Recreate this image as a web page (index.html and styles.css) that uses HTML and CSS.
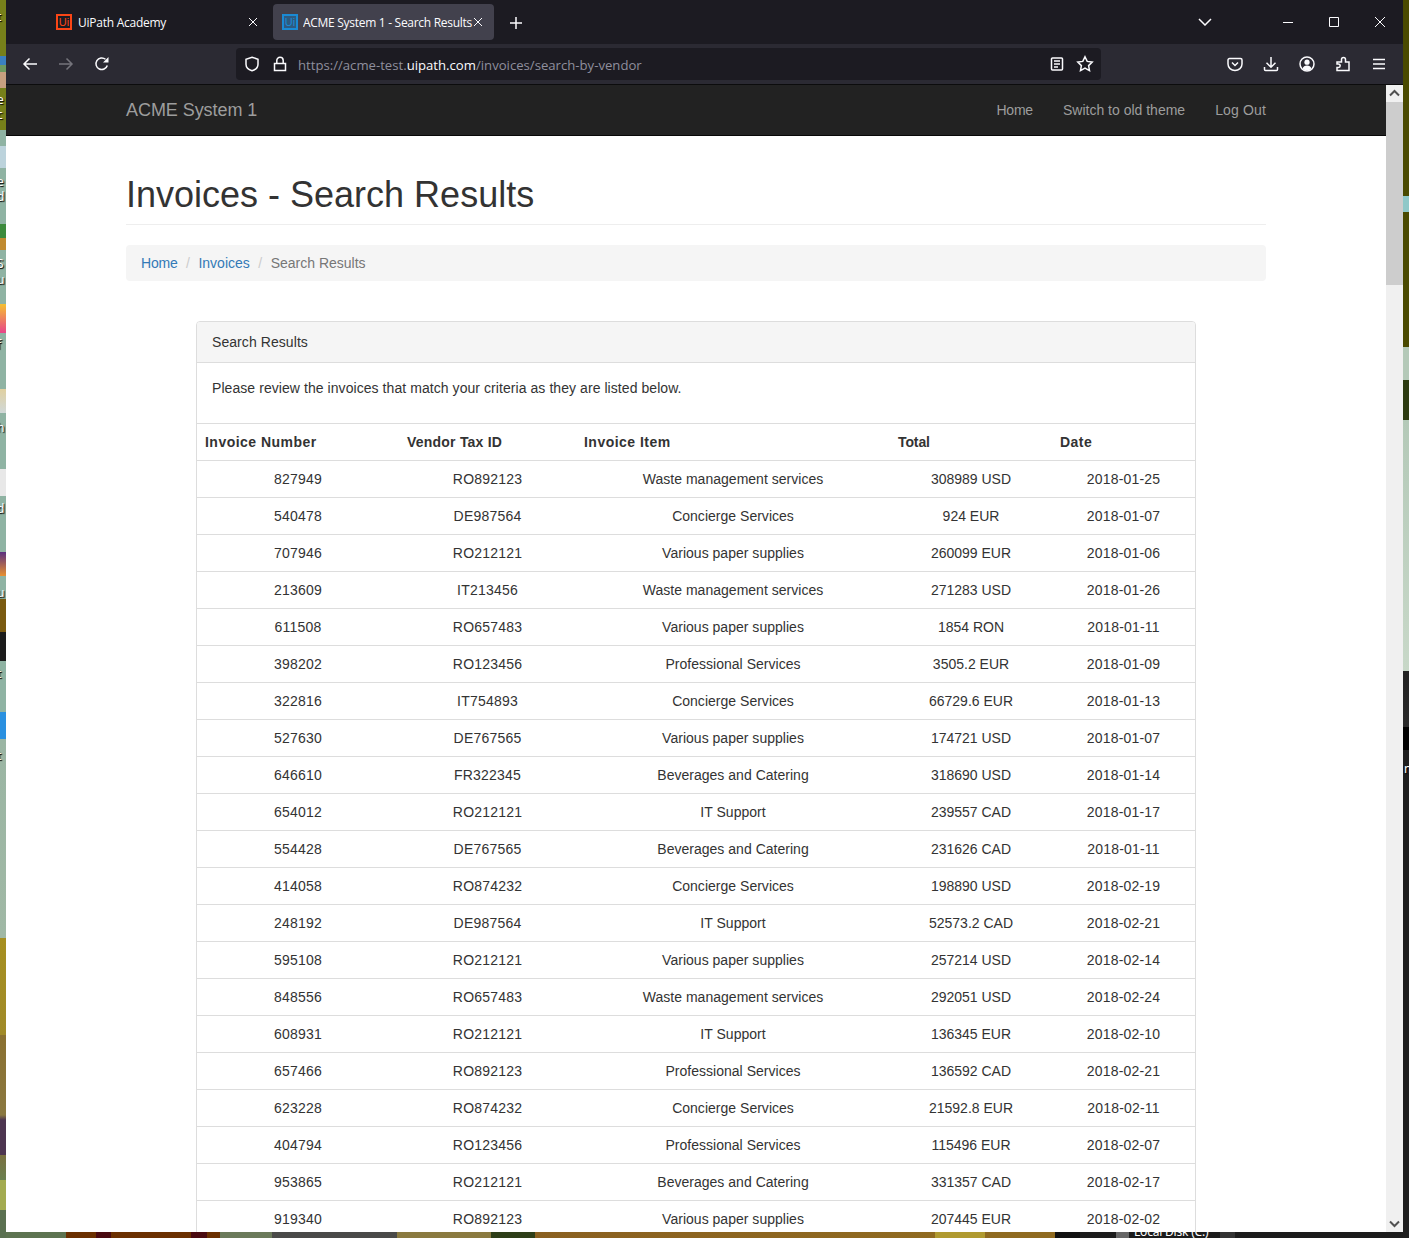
FILE: index.html
```html
<!DOCTYPE html>
<html lang="en">

<head>
    <meta charset="UTF-8">
    <title>ACME System 1 - Search Results</title>
    <link rel="stylesheet" href="styles.css">
</head>

<body>
    <!-- bits of the desktop showing round the window -->
    <span class="deskLabel l1">t</span>
    <span class="deskLabel l2">e</span>
    <span class="deskLabel l3">c</span>
    <span class="deskLabel l4">e</span>
    <span class="deskLabel l5">d</span>
    <span class="deskLabel l6">S</span>
    <span class="deskLabel l7">u</span>
    <span class="deskLabel l8">f</span>
    <span class="deskLabel l9">h</span>
    <span class="deskLabel l10">d</span>
    <span class="deskLabel l11">u</span>
    <span class="deskLabel l12">t</span>
    <span class="deskLabel l13">t</span>
    <span class="deskLabel l14">n</span>
    <span class="diskLabel">Local Disk (C:)</span>
    <span class="diskIcon"></span>

    <div class="window">
        <div class="tabBar">
            <div class="tab">
                <span class="favicon orange">Ui</span>
                <span class="tabTitle">UiPath Academy</span>
                <svg class="tabClose" width="10" height="10" viewBox="0 0 10 10"><path d="M1 1l8 8M9 1l-8 8"/></svg>
            </div>
            <div class="tab active">
                <span class="favicon blue">Ui</span>
                <span class="tabTitle">ACME System 1 - Search Results</span>
                <svg class="tabClose" width="10" height="10" viewBox="0 0 10 10"><path d="M1 1l8 8M9 1l-8 8"/></svg>
            </div>
            <svg class="newTab" width="14" height="14" viewBox="0 0 14 14"><path d="M7 1v12M1 7h12"/></svg>
            <svg class="tabList" width="14" height="8" viewBox="0 0 14 8"><path d="M1 1l6 6 6-6"/></svg>
            <div class="winButtons">
                <svg width="12" height="12" viewBox="0 0 12 12"><path d="M1 6.5h10"/></svg>
                <svg width="12" height="12" viewBox="0 0 12 12"><path d="M1.5 1.5h9v9h-9z"/></svg>
                <svg width="12" height="12" viewBox="0 0 12 12"><path d="M1 1l10 10M11 1L1 11"/></svg>
            </div>
        </div>

        <div class="toolBar">
            <div class="navButtons">
                <svg class="tool" width="16" height="16" viewBox="0 0 16 16"><path d="M15 8H2M7.5 2.5L2 8l5.500 5.500"/></svg>
                <svg class="tool dim" width="16" height="16" viewBox="0 0 16 16"><path d="M1 8h13M8.500 2.500L14 8l-5.500 5.500"/></svg>
                <svg class="tool" width="16" height="16" viewBox="0 0 16 16"><path d="M13.300 9.500A5.800 5.800 0 1 1 11.500 3.300"/><path class="fill" d="M14.500 1v5.500H9z"/></svg>
            </div>
            <div class="urlBar">
                <svg class="tool" width="16" height="16" viewBox="0 0 16 16"><path d="M8 1.200l6 2v5c0 3.300-2.600 5.500-6 6.600-3.400-1.100-6-3.300-6-6.600v-5z"/></svg>
                <svg class="tool lock" width="14" height="16" viewBox="0 0 14 16"><path d="M1.500 7.500h11v7h-11zM3.800 7.500V4.500a3.200 3.200 0 0 1 6.400 0v3"/></svg>
                <span class="url">https://acme-test.<b>uipath.com</b>/invoices/search-by-vendor</span>
                <svg class="tool" width="14" height="16" viewBox="0 0 14 16"><path d="M2.500 2h9a1 1 0 0 1 1 1v10a1 1 0 0 1-1 1h-9a1 1 0 0 1-1-1V3a1 1 0 0 1 1-1zM4 5h6M4 8h6M4 11h4"/></svg>
                <svg class="tool" width="18" height="18" viewBox="0 0 18 18"><path d="M9 1.800l2.200 4.600 5 .7-3.600 3.500.9 5L9 13.200l-4.500 2.400.9-5L1.800 7.100l5-.7z"/></svg>
            </div>
            <div class="rightTools">
                <svg class="tool" width="16" height="16" viewBox="0 0 16 16"><path d="M2.500 2.500h11A1.500 1.500 0 0 1 15 4v4a7 6.500 0 0 1-14 0V4a1.500 1.500 0 0 1 1.500-1.500zM5 6.500l3 3 3-3"/></svg>
                <svg class="tool" width="16" height="16" viewBox="0 0 16 16"><path d="M8 1v10M3.500 6.800L8 11.200l4.500-4.400M1.500 11v2.500a1 1 0 0 0 1 1h11a1 1 0 0 0 1-1V11"/></svg>
                <svg class="tool" width="16" height="16" viewBox="0 0 16 16"><circle cx="8" cy="8" r="7"/><circle class="fill" cx="8" cy="6.200" r="2.600"/><path class="fill" d="M3.500 12.500c.6-2 2.400-3 4.500-3s3.900 1 4.500 3a6 6 0 0 1-9 0z"/></svg>
                <svg class="tool" width="16" height="16" viewBox="0 0 16 16"><path d="M2 6h4.500V3.500a2 2 0 0 1 4 0V6h3.500v8.500H2v-3h1.500a1.700 1.700 0 0 0 0-3.400H2z"/></svg>
                <svg class="tool" width="16" height="16" viewBox="0 0 16 16"><path d="M2 3.500h12M2 8h12M2 12.500h12"/></svg>
            </div>
        </div>

        <div class="viewport">
            <div class="page">
                <div class="navbar">
                    <div class="container navInner">
                        <a class="brand" href="#">ACME System 1</a>
                        <ul class="navLinks">
                            <li><a href="#">Home</a></li>
                            <li><a href="#">Switch to old theme</a></li>
                            <li><a href="#">Log Out</a></li>
                        </ul>
                    </div>
                </div>

                <div class="container">
                    <h1 class="pageHeader">Invoices - Search Results</h1>

                    <ol class="breadcrumb">
                        <li><a href="#">Home</a></li>
                        <li><a href="#">Invoices</a></li>
                        <li class="current">Search Results</li>
                    </ol>

                    <div class="panel">
                        <div class="panelHeading">Search Results</div>
                        <div class="panelBody">
                            <p>Please review the invoices that match your criteria as they are listed below.</p>
                        </div>
                        <table class="results">
                            <thead>
                                <tr>
                                    <th class="colNumber">Invoice Number</th>
                                    <th class="colVendor">Vendor Tax ID</th>
                                    <th class="colItem">Invoice Item</th>
                                    <th class="colTotal">Total</th>
                                    <th class="colDate">Date</th>
                                </tr>
                            </thead>
                            <tbody>
                                <tr><td>827949</td><td>RO892123</td><td>Waste management services</td><td>308989 USD</td><td>2018-01-25</td></tr>
                                <tr><td>540478</td><td>DE987564</td><td>Concierge Services</td><td>924 EUR</td><td>2018-01-07</td></tr>
                                <tr><td>707946</td><td>RO212121</td><td>Various paper supplies</td><td>260099 EUR</td><td>2018-01-06</td></tr>
                                <tr><td>213609</td><td>IT213456</td><td>Waste management services</td><td>271283 USD</td><td>2018-01-26</td></tr>
                                <tr><td>611508</td><td>RO657483</td><td>Various paper supplies</td><td>1854 RON</td><td>2018-01-11</td></tr>
                                <tr><td>398202</td><td>RO123456</td><td>Professional Services</td><td>3505.2 EUR</td><td>2018-01-09</td></tr>
                                <tr><td>322816</td><td>IT754893</td><td>Concierge Services</td><td>66729.6 EUR</td><td>2018-01-13</td></tr>
                                <tr><td>527630</td><td>DE767565</td><td>Various paper supplies</td><td>174721 USD</td><td>2018-01-07</td></tr>
                                <tr><td>646610</td><td>FR322345</td><td>Beverages and Catering</td><td>318690 USD</td><td>2018-01-14</td></tr>
                                <tr><td>654012</td><td>RO212121</td><td>IT Support</td><td>239557 CAD</td><td>2018-01-17</td></tr>
                                <tr><td>554428</td><td>DE767565</td><td>Beverages and Catering</td><td>231626 CAD</td><td>2018-01-11</td></tr>
                                <tr><td>414058</td><td>RO874232</td><td>Concierge Services</td><td>198890 USD</td><td>2018-02-19</td></tr>
                                <tr><td>248192</td><td>DE987564</td><td>IT Support</td><td>52573.2 CAD</td><td>2018-02-21</td></tr>
                                <tr><td>595108</td><td>RO212121</td><td>Various paper supplies</td><td>257214 USD</td><td>2018-02-14</td></tr>
                                <tr><td>848556</td><td>RO657483</td><td>Waste management services</td><td>292051 USD</td><td>2018-02-24</td></tr>
                                <tr><td>608931</td><td>RO212121</td><td>IT Support</td><td>136345 EUR</td><td>2018-02-10</td></tr>
                                <tr><td>657466</td><td>RO892123</td><td>Professional Services</td><td>136592 CAD</td><td>2018-02-21</td></tr>
                                <tr><td>623228</td><td>RO874232</td><td>Concierge Services</td><td>21592.8 EUR</td><td>2018-02-11</td></tr>
                                <tr><td>404794</td><td>RO123456</td><td>Professional Services</td><td>115496 EUR</td><td>2018-02-07</td></tr>
                                <tr><td>953865</td><td>RO212121</td><td>Beverages and Catering</td><td>331357 CAD</td><td>2018-02-17</td></tr>
                                <tr><td>919340</td><td>RO892123</td><td>Various paper supplies</td><td>207445 EUR</td><td>2018-02-02</td></tr>
                            </tbody>
                        </table>
                    </div>
                </div>
            </div>

            <div class="scrollbar">
                <svg class="arrow" width="17" height="17" viewBox="0 0 17 17"><path d="M4 10.500l4.500-4.500 4.500 4.500"/></svg>
                <div class="thumb"></div>
                <div class="track"></div>
                <svg class="arrow" width="17" height="17" viewBox="0 0 17 17"><path d="M4 6.500l4.500 4.500 4.500-4.500"/></svg>
            </div>
        </div>
    </div>
</body>
</html>
```

FILE: styles.css
```css
* {
    box-sizing: border-box;
}

body {
    margin: 0;
    height: 1238px;
    padding: 0 6px 6px;
    overflow: hidden;
    position: relative;
    font-family: "Liberation Sans", Arial, sans-serif;
    font-size: 14px;
    line-height: 20px;
    color: #333;
    background-color: #5d7350;
    background-image:
        linear-gradient(to bottom, #76801a 0, #76801a 56px, #3a80c0 56px, #3a80c0 65px, #6f9a60 65px, #6f9a60 72px, #c8a080 72px, #c8a080 88px, #76801a 88px, #76801a 130px, #8fb3a3 130px, #8fb3a3 146px, #bcd3dc 146px, #bcd3dc 168px, #8fb3a3 168px, #8fb3a3 224px, #3c8a3c 224px, #3c8a3c 238px, #c08a30 238px, #c08a30 250px, #8fb3a3 250px, #8fb3a3 304px, #f5c030 304px, #e8458a 333px, #8fb3a3 333px, #8fb3a3 389px, #e0d0a0 389px, #d0d8d8 413px, #8fb3a3 413px, #8fb3a3 469px, #e8e8e8 469px, #e8e8e8 496px, #8fb3a3 496px, #8fb3a3 552px, #5a3080 552px, #e89030 576px, #8fb3a3 576px, #8fb3a3 599px, #7a5a10 599px, #7a5a10 632px, #1c1c1c 632px, #1c1c1c 661px, #8fb3a3 661px, #8fb3a3 712px, #2a90e0 712px, #2a90e0 739px, #9ab5a3 739px, #a0b8a5 938px, #a68f20 938px, #a08a28 1035px, #8a7030 1035px, #8a7840 1115px, #4d3550 1120px, #4d3550 1155px, #7a7040 1155px, #6a8050 1180px, #a3ab50 1180px, #a3ab50 1210px, #5a7050 1210px, #5a7050 1238px),
        linear-gradient(to bottom, #4a4a00 0, #4a4a00 196px, #8fc8c8 196px, #8fc8c8 212px, #4a4a00 212px, #4a4a00 347px, #b4c9b8 347px, #b4c9b8 380px, #2c3a10 380px, #2c3a10 420px, #b4c9b8 420px, #c8d8c8 671px, #222 671px, #2a2a2a 727px, #000 727px, #000 750px, #1e1e1e 750px),
        linear-gradient(to right, #5d7350 0, #5d7350 66px, #6b3000 66px, #6b3000 96px, #4a0a10 96px, #4a0a10 111px, #6b3000 111px, #6b3000 191px, #4a0a10 191px, #4a0a10 207px, #6b3000 207px, #6b3000 220px, #6b7a5a 220px, #6b7a5a 272px, #4a4a48 272px, #4a4a48 397px, #8a7a40 397px, #8a7a40 491px, #2e3e18 491px, #2e3e18 535px, #8a6020 535px, #8f6a20 935px, #b09a30 935px, #b09a30 985px, #8f6a20 985px, #8f6a20 1055px, #111 1055px, #111 1080px, #1c1c1c 1080px, #1c1c1c 1220px, #333 1220px, #333 1235px, #1c1c1c 1235px);
    background-size: 6px 100%, 6px 100%, 100% 6px;
    background-position: left top, right top, left bottom;
    background-repeat: no-repeat;
}

/* desktop icon captions, cut off by the window */
.deskLabel {
    position: absolute;
    left: -3px;
    font: 12px/14px "Noto Sans", sans-serif;
    color: #fff;
    text-shadow: 1px 1px 1px #000;
}

.l1 { top: 10px; }
.l2 { top: 93px; }
.l3 { top: 108px; }
.l4 { top: 175px; }
.l5 { top: 190px; }
.l6 { top: 257px; }
.l7 { top: 273px; }
.l8 { top: 338px; }
.l9 { top: 421px; }
.l10 { top: 502px; }
.l11 { top: 586px; }
.l12 { top: 667px; }
.l13 { top: 749px; }
.l14 { top: 762px; left: 1404px; }

.diskLabel {
    position: absolute;
    left: 1134px;
    top: 1225px;
    font: 12px/14px "Noto Sans", sans-serif;
    letter-spacing: -.2px;
    color: #fff;
}

.diskIcon {
    position: absolute;
    left: 1116px;
    top: 1230px;
    width: 13px;
    height: 8px;
    background: #666;
}

.window {
    position: relative;
    height: 1232px;
    display: flex;
    flex-direction: column;
    background: #fff;
}

/* browser chrome */
.tabBar {
    height: 44px;
    flex: none;
    display: flex;
    align-items: center;
    background: #1c1b22;
    color: #fbfbfe;
    font: 12px/16px "Open Sans", sans-serif;
    padding-left: 40px;
}

.tab {
    width: 220px;
    height: 36px;
    margin-right: 7px;
    padding: 0 8px 0 10px;
    display: flex;
    align-items: center;
    border-radius: 4px;
}

.tab.active {
    width: 221px;
    margin-right: 15px;
    padding: 0 11px 0 9px;
    background: #42414d;
}

.favicon {
    width: 16px;
    height: 16px;
    flex: none;
    margin-right: 6px;
    border: 2px solid;
    font: 11px/12px "Liberation Sans", sans-serif;
    text-align: center;
}

.active .favicon {
    margin-right: 5px;
}

.orange {
    color: #fa4616;
    border-color: #fa4616;
}

.blue {
    color: #1a8ad4;
    border-color: #1a8ad4;
    background: #2e5a80;
}

.tabTitle {
    flex: 1;
    margin-top: 2px;
    white-space: nowrap;
    overflow: hidden;
    letter-spacing: -.25px;
}

.active .tabTitle {
    letter-spacing: -.29px;
}

svg path,
svg circle {
    fill: none;
    stroke: #fbfbfe;
    stroke-width: 1.5;
}

.tabClose path,
.winButtons path {
    stroke-width: 1;
}

.tool .fill {
    fill: #fbfbfe;
    stroke: none;
}

.tool.dim path {
    stroke: #75747c;
}

.newTab,
.tabList {
    flex: none;
}

.newTab {
    margin-top: 2px;
}

.tabList {
    margin-left: 675px;
}

.winButtons {
    margin-left: 70px;
    display: flex;
    gap: 34px;
}

.toolBar {
    height: 41px;
    flex: none;
    display: flex;
    align-items: center;
    background: #2b2a33;
    border-bottom: 1px solid #0c0c0d;
}

.navButtons {
    width: 230px;
    padding-left: 16px;
    display: flex;
    gap: 20px;
}

.urlBar {
    width: 865px;
    height: 32px;
    display: flex;
    align-items: center;
    gap: 12px;
    padding: 0 7px 0 8px;
    background: #1c1b22;
    border-radius: 4px;
}

.urlBar .lock {
    margin: 0 -1px 0 1px;
}

.url {
    flex: 1;
    margin-top: 2px;
    color: #8f8f9d;
    font: 13.15px/16px "Open Sans", sans-serif;
    white-space: nowrap;
}

.url b {
    color: #fbfbfe;
    font-weight: 400;
}

.rightTools {
    margin-left: 126px;
    display: flex;
    gap: 20px;
}

.viewport {
    flex: 1;
    min-height: 0;
    display: flex;
}

.page {
    flex: 1;
    min-width: 0;
    overflow: hidden;
}

.scrollbar {
    width: 17px;
    flex: none;
    display: flex;
    flex-direction: column;
    background: #f0f0f0;
}

.arrow {
    flex: none;
}

.arrow path {
    stroke: #505050;
    stroke-width: 2;
}

.thumb {
    height: 183px;
    flex: none;
    background: #cdcdcd;
}

.track {
    flex: 1;
}

/* site */
.container {
    width: 1170px;
    margin: 0 auto;
    padding: 0 15px;
}

.navbar {
    height: 51px;
    background: #222;
    border-bottom: 1px solid #080808;
}

.navInner {
    display: flex;
    justify-content: space-between;
}

.brand {
    font-size: 18px;
    line-height: 20px;
    padding: 15px 0;
    letter-spacing: -.06px;
    color: #9d9d9d;
    text-decoration: none;
}

.navLinks {
    list-style: none;
    margin: 0 -15px 0 0;
    padding: 0;
    display: flex;
}

.navLinks a {
    display: block;
    padding: 15px;
    color: #9d9d9d;
    text-decoration: none;
}

.navLinks li:first-child a {
    letter-spacing: -.2px;
}

.navLinks li:last-child a {
    letter-spacing: .15px;
}

.pageHeader {
    margin: 39px 0 20px;
    padding-bottom: 9px;
    border-bottom: 1px solid #eee;
    font-size: 36px;
    font-weight: 500;
    line-height: 39.600px;
}

.breadcrumb {
    list-style: none;
    margin: 0 0 40px;
    padding: 8px 15px;
    display: flex;
    background: #f5f5f5;
    border-radius: 4px;
}

.breadcrumb a {
    color: #337ab7;
    text-decoration: none;
}

.breadcrumb li:first-child a {
    letter-spacing: -.2px;
}

.breadcrumb li + li::before {
    content: "/";
    padding: 0 8.500px;
    color: #ccc;
}

.breadcrumb .current {
    color: #777;
}

.panel {
    width: 1000px;
    margin: 0 auto;
    border: 1px solid #ddd;
    border-radius: 4px;
}

.panelHeading {
    padding: 10px 15px;
    letter-spacing: .07px;
    background: #f5f5f5;
    border-bottom: 1px solid #ddd;
    border-radius: 3px 3px 0 0;
}

.panelBody {
    padding: 15px;
}

.panelBody p {
    margin: 0 0 10px;
    letter-spacing: .065px;
}

.results {
    width: 100%;
    table-layout: fixed;
    border-collapse: collapse;
}

.results th,
.results td {
    padding: 8px;
    border-top: 1px solid #ddd;
    line-height: 20px;
}

.results th {
    text-align: left;
    letter-spacing: .47px;
}

.results td {
    text-align: center;
    letter-spacing: .02px;
}

/* the digit columns run a little wider than the rest */
.results td:nth-child(1),
.results td:nth-child(2),
.results td:nth-child(5) {
    letter-spacing: .2px;
}

.results td:nth-child(4) {
    letter-spacing: 0;
}

.colNumber { width: 202px; }
.results .colVendor { width: 177px; letter-spacing: .22px; }
.colItem { width: 314px; }
.results .colTotal { width: 162px; letter-spacing: -.1px; }
.colDate { width: 143px; }
```
